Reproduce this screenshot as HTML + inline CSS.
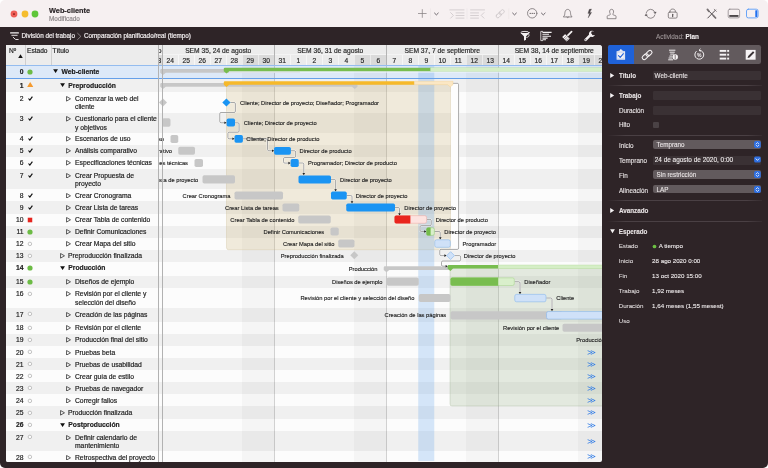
<!DOCTYPE html><html lang="es"><head><meta charset="utf-8"><title>Web-cliente</title><style>
html,body{margin:0;padding:0;background:#fff}
body{width:768px;height:468px;overflow:hidden;position:relative;font-family:"Liberation Sans",sans-serif;color:#1c1c1c;-webkit-font-smoothing:antialiased}
div,span,svg{position:absolute;box-sizing:border-box}
.win{will-change:transform;left:0;top:0;width:768px;height:468px;background:linear-gradient(#f6f0f1 0,#f6f0f1 27.4px,#2e2427 27.4px);border-radius:5px;overflow:hidden}
.tb{left:0;top:0;width:768px;height:27px;background:transparent}
.t{white-space:nowrap;line-height:8px;font-size:6.75px;-webkit-text-stroke:0.18px currentColor}
.b{font-weight:bold}
.row{left:6px;width:596px}
.gl{font-size:5.75px;line-height:8px;white-space:nowrap;color:#222}
.rp{font-size:6.3px;line-height:8px;white-space:nowrap;color:#e9e4e5;-webkit-text-stroke:0.1px currentColor}
text.l{fill:#222;stroke:#222;stroke-width:0.13px}
</style></head><body>
<div class="win">
<div class="tb"></div>
<svg style="left:9.90px;top:9.8px" width="8" height="8" viewBox="0 0 8 8"><circle cx="4" cy="4" r="3.4" fill="#ee5f57"/><circle cx="4" cy="4" r="0.85" fill="#6e0a08"/></svg>
<svg style="left:20.60px;top:9.8px" width="8" height="8" viewBox="0 0 8 8"><circle cx="4" cy="4" r="3.4" fill="#f5bd2f"/></svg>
<svg style="left:31.30px;top:9.8px" width="8" height="8" viewBox="0 0 8 8"><circle cx="4" cy="4" r="3.4" fill="#5fc63a"/></svg>
<div class="t b" style="left:49px;top:7.1px;font-size:7.35px;color:#2b2628">Web-cliente</div>
<div class="t" style="left:49px;top:15px;font-size:6.4px;color:#8d8789">Modificado</div>
<svg style="left:400px;top:0" width="368" height="27" viewBox="400 0 368 27" fill="none" stroke-linecap="round" stroke-linejoin="round">
<path d="M418.4 13.5 H426.2 M422.3 9.6 V17.4" stroke="#878183" stroke-width="0.75"/>
<path d="M430.50 8.8 V18.7" stroke="#ebe4e6" stroke-width="0.6"/>
<path d="M467.00 8.8 V18.7" stroke="#ebe4e6" stroke-width="0.6"/>
<path d="M508.75 8.8 V18.7" stroke="#ebe4e6" stroke-width="0.6"/>
<path d="M434.55 13.1 L436.40 14.9 L438.25 13.1" stroke="#59545a" stroke-width="0.9"/>
<path d="M512.65 13.1 L514.50 14.9 L516.35 13.1" stroke="#59545a" stroke-width="0.9"/>
<path d="M541.45 13.1 L543.30 14.9 L545.15 13.1" stroke="#59545a" stroke-width="0.9"/>
<path d="M449.8 9.9 H464 M456 12.9 H464 M456 15.5 H464 M456 18.1 H464 M450.6 12.6 L453.4 15.4 L450.6 18.2" stroke="#cdc7c9" stroke-width="0.8"/>
<path d="M470.6 9.9 H484.5 M470.6 12.9 H478.5 M470.6 15.5 H478.5 M470.6 18.1 H478.5 M484 12.6 L481.2 15.4 L484 18.2" stroke="#cdc7c9" stroke-width="0.8"/>
<g transform="translate(500.2 13.8) rotate(-45)" stroke="#cdc7c9" stroke-width="0.85"><rect x="-5" y="-1.7" width="5.8" height="3.4" rx="1.7"/><rect x="-0.8" y="-1.7" width="5.8" height="3.4" rx="1.7"/></g>
<circle cx="532.2" cy="13.3" r="4.7" stroke="#777173" stroke-width="0.8"/>
<circle cx="530.20" cy="13.3" r="0.65" fill="#4d484a"/>
<circle cx="532.20" cy="13.3" r="0.65" fill="#4d484a"/>
<circle cx="534.20" cy="13.3" r="0.65" fill="#4d484a"/>
<path d="M563.6 16.7 C564.9 15.6 564.7 14.2 564.9 12.6 C565.2 10.4 566.3 9.4 567.7 9.4 C569.1 9.4 570.2 10.4 570.5 12.6 C570.7 14.2 570.5 15.6 571.8 16.7 Z M566.8 17 C566.9 18 568.5 18 568.6 17" stroke="#777173" stroke-width="0.8"/>
<path d="M591.4 9.1 L589.3 9.3 L587.9 13.4 L589.5 13.3 L588.2 17.9 L591.6 12.4 L589.9 12.5 Z" fill="#4d484a" stroke="#4d484a" stroke-width="0.3"/>
<path d="M607.2 18.3 V16.4 C607.2 15.6 607.9 15.4 609.3 15.2 C610.4 15 610.5 14.2 610 13.3 C609.3 12.2 609.3 9.3 611.6 9.3 C613.9 9.3 613.9 12.2 613.2 13.3 C612.7 14.2 612.8 15 613.9 15.2 C615.3 15.4 616 15.6 616 16.4 V18.3 Z" stroke="#777173" stroke-width="0.8"/>
<path d="M646.25 12.64 A4.5 4.5 0 0 1 654.77 12.11 M654.95 14.96 A4.5 4.5 0 0 1 646.43 15.49" stroke="#777173" stroke-width="0.8"/>
<path d="M655.16 13.77 l1.1 -1.8 l-2.1 0.2 Z M646.04 13.83 l-1.1 1.8 l2.1 -0.2 Z" fill="#4d484a" stroke="#4d484a" stroke-width="0.3"/>
<rect x="668.3" y="12.1" width="8.8" height="6" rx="1.2" stroke="#777173" stroke-width="0.85"/>
<path d="M670.1 12 V11 C670.1 8.4 675.3 8.4 675.3 11 V12" stroke="#777173" stroke-width="0.85"/>
<path d="M672.7 14.2 V16.6" stroke="#4d484a" stroke-width="1.1"/>
<path d="M707.6 9.6 L715.2 17.6 M715.6 10 L707.8 18" stroke="#4d484a" stroke-width="0.95"/>
<path d="M713.2 15.4 L715.6 18 M707.4 9.4 L709 11.4" stroke="#777173" stroke-width="1.7"/>
<path d="M714.2 9.2 L716.4 11.4" stroke="#777173" stroke-width="0.8"/>
<rect x="728.2" y="9.2" width="11.4" height="8.7" rx="1.6" stroke="#8e888a" stroke-width="0.8"/>
<rect x="729.3" y="15" width="9.2" height="1.9" fill="#4d484a"/>
<rect x="746.5" y="9.2" width="11.6" height="8.7" rx="1.8" stroke="#6aa5f8" stroke-width="1"/>
<rect x="755.3" y="10.2" width="2" height="6.7" rx="0.5" fill="#1f6ff0"/>
</svg>
<div class="t" style="left:21.5px;top:32.2px;font-size:6.33px;color:#f3eff0">División del trabajo</div>
<div class="t" style="left:84px;top:32.2px;font-size:6.33px;color:#f3eff0">Comparación planificado/real (tiempo)</div>
<svg style="left:6px;top:27px" width="596" height="18" viewBox="6 27 596 18" fill="none" stroke-linecap="round" stroke-linejoin="round">
<path d="M10.6 32.9 H18.4" stroke="#f4f1f2" stroke-width="1.2"/>
<path d="M11.8 35.3 H17.2 M13.2 37.3 L15.6 39.5 H18.2" stroke="#f4f1f2" stroke-width="0.9"/>
<path d="M77.6 33.3 L80.9 36.4 L77.6 39.5" stroke="#aaa3a5" stroke-width="0.7"/>
<ellipse cx="525" cy="32.7" rx="4.2" ry="1.3" stroke="#f4f1f2" stroke-width="0.9"/>
<path d="M520.8 33 L524 36.6 V40.8 L526 39.8 V36.6 L529.2 33 Z" fill="#f4f1f2"/>
<path d="M526.6 37.4 C529.4 37.4 529.6 34.6 528.6 34" stroke="#f4f1f2" stroke-width="0.8"/>
<path d="M542.6 31.4 H540.8 V40.6 H542.6" stroke="#f4f1f2" stroke-width="0.8"/>
<path d="M542.4 32.4 H551.6 M542.4 34.3 H549 M542.4 36.2 H551 M542.4 38.1 H547.6 M542.4 39.8 H546" stroke="#f4f1f2" stroke-width="1.1" stroke-linecap="butt"/>
<path d="M571.6 31.6 L567.6 35.6" stroke="#f4f1f2" stroke-width="1.7"/>
<path d="M565.2 34 L569.8 38.4 L566.6 41.4 L562.2 37 Z" fill="#f4f1f2"/>
<path d="M563.6 38.4 L565.6 36.4 M564.8 39.6 L566.8 37.6 M566 40.8 L568 38.8" stroke="#2e2427" stroke-width="0.45"/>
<path d="M565.6 34.4 L569.4 38" stroke="#2e2427" stroke-width="0.5"/>
<path d="M585.6 39.9 L590.8 34.7" stroke="#f4f1f2" stroke-width="2.6"/>
<path d="M594.2 31.6 A3.1 3.1 0 1 0 594.9 34.9 L592.6 35.3 L590.9 33.6 L591.8 31.3 Z" fill="#f4f1f2"/>
<circle cx="585.7" cy="39.8" r="0.55" fill="#2e2427"/>
</svg>
<div style="left:6px;top:45px;width:596px;height:416.70px;background:#fcfcfc;overflow:hidden;border-radius:0 3px 2px 2px">
<div style="left:0;top:20.00px;width:596px;height:13.75px;background:#dde9f8"></div>
<div style="left:0;top:33.75px;width:596px;height:13.15px;background:#f0f0f0"></div>
<div style="left:0;top:67.50px;width:596px;height:20.25px;background:#f0f0f0"></div>
<div style="left:0;top:99.75px;width:596px;height:11.75px;background:#f0f0f0"></div>
<div style="left:0;top:123.75px;width:596px;height:20.25px;background:#f0f0f0"></div>
<div style="left:0;top:156.25px;width:596px;height:12.25px;background:#f0f0f0"></div>
<div style="left:0;top:180.60px;width:596px;height:12.15px;background:#f0f0f0"></div>
<div style="left:0;top:205.00px;width:596px;height:12.25px;background:#f0f0f0"></div>
<div style="left:0;top:230.60px;width:596px;height:12.15px;background:#f0f0f0"></div>
<div style="left:0;top:262.90px;width:596px;height:14.00px;background:#f0f0f0"></div>
<div style="left:0;top:288.75px;width:596px;height:11.85px;background:#f0f0f0"></div>
<div style="left:0;top:312.75px;width:596px;height:12.00px;background:#f0f0f0"></div>
<div style="left:0;top:336.90px;width:596px;height:12.10px;background:#f0f0f0"></div>
<div style="left:0;top:361.40px;width:596px;height:12.20px;background:#f0f0f0"></div>
<div style="left:0;top:385.90px;width:596px;height:20.00px;background:#f0f0f0"></div>
<div style="left:236.25px;top:20px;width:32px;height:500px;background:rgba(0,0,0,0.028)"></div>
<div style="left:348.25px;top:20px;width:32px;height:500px;background:rgba(0,0,0,0.028)"></div>
<div style="left:460.25px;top:20px;width:32px;height:500px;background:rgba(0,0,0,0.028)"></div>
<div style="left:572.25px;top:20px;width:32px;height:500px;background:rgba(0,0,0,0.028)"></div>
<div style="left:268.00px;top:20px;width:1px;height:500px;background:rgba(0,0,0,0.17)"></div>
<div style="left:380.00px;top:20px;width:1px;height:500px;background:rgba(0,0,0,0.17)"></div>
<div style="left:492.00px;top:20px;width:1px;height:500px;background:rgba(0,0,0,0.17)"></div>
<svg style="left:0;top:0" width="596" height="416.25" viewBox="6 45 596 416.25" font-family="Liberation Sans, sans-serif" font-size="5.75">
<path d="M226.5 84.5 H450.6 V247.7 Q450.6 249.7 448.6 249.7 H228.5 Q226.5 249.7 226.5 247.7 Z" fill="rgba(204,180,120,0.25)" stroke="rgba(190,165,110,0.45)" stroke-width="0.5"/>
<path d="M450 268.5 H610 V406 H452 Q450 406 450 404 Z" fill="rgba(159,181,144,0.27)" stroke="rgba(140,165,120,0.5)" stroke-width="0.5"/>
<rect x="418.25" y="65" width="16" height="400" fill="rgba(92,160,236,0.25)"/>
<path d="M160.25 70.20 Q160.25 69.00 161.45 69.00 H300.00 V72.75 H165.75 L163.00 75.05 L160.25 72.75 Z" fill="#c7c7c7" />
<rect x="229" y="71.25" width="380" height="1.3" fill="#eef4fc"/>
<path d="M160.25 84.20 Q160.25 83.00 161.45 83.00 H357.50 V86.75 L354.75 89.05 L352.00 86.75 H165.75 L163.00 89.05 L160.25 86.75 Z" fill="#c7c7c7" />
<path d="M383.75 267.45 Q383.75 266.25 384.95 266.25 H449.50 V270.00 H389.25 L386.50 272.30 L383.75 270.00 Z" fill="#c7c7c7" />
<rect x="162.00" y="118.25" width="8.50" height="8.50" rx="1.8" fill="#c7c7c7"/>
<rect x="170.50" y="135.00" width="7.75" height="8.00" rx="1.8" fill="#c7c7c7"/>
<rect x="178.25" y="146.75" width="16.75" height="8.00" rx="1.8" fill="#c7c7c7"/>
<rect x="194.50" y="159.00" width="8.50" height="8.00" rx="1.8" fill="#c7c7c7"/>
<rect x="202.50" y="175.25" width="32.50" height="8.25" rx="1.8" fill="#c7c7c7"/>
<rect x="234.50" y="191.50" width="48.50" height="8.00" rx="1.8" fill="#c7c7c7"/>
<rect x="282.50" y="203.50" width="16.75" height="8.00" rx="1.8" fill="#c7c7c7"/>
<rect x="298.25" y="215.50" width="32.50" height="8.00" rx="1.8" fill="#c7c7c7"/>
<rect x="330.50" y="227.50" width="8.25" height="8.10" rx="1.8" fill="#c7c7c7"/>
<rect x="338.25" y="239.50" width="16.25" height="8.10" rx="1.8" fill="#c7c7c7"/>
<rect x="386.75" y="277.60" width="32.00" height="8.15" rx="1.8" fill="#c7c7c7"/>
<rect x="418.75" y="294.10" width="31.75" height="8.00" rx="1.8" fill="#c7c7c7"/>
<rect x="450.50" y="311.25" width="112.00" height="8.15" rx="1.8" fill="#c7c7c7"/>
<rect x="562.50" y="323.75" width="49.50" height="8.00" rx="1.8" fill="#c7c7c7"/>
<path d="M159.00 102.50 L163.00 98.50 L167.00 102.50 L163.00 106.50 Z" fill="#c7c7c7"/>
<path d="M350.25 255.30 L354.25 251.30 L358.25 255.30 L354.25 259.30 Z" fill="#c7c7c7"/>
<text x="164.00" y="141.10" text-anchor="end" class="l">Escenarios de uso</text>
<text x="172.00" y="152.85" text-anchor="end" class="l">Análisis comparativo</text>
<text x="188.00" y="165.10" text-anchor="end" class="l">Especificaciones técnicas</text>
<text x="198.25" y="181.50" text-anchor="end" class="l">Crear Propuesta de proyecto</text>
<text x="230.50" y="197.60" text-anchor="end" class="l">Crear Cronograma</text>
<text x="278.75" y="209.60" text-anchor="end" class="l">Crear Lista de tareas</text>
<text x="294.50" y="221.60" text-anchor="end" class="l">Crear Tabla de contenido</text>
<text x="324.25" y="233.60" text-anchor="end" class="l">Definir Comunicaciones</text>
<text x="334.50" y="245.60" text-anchor="end" class="l">Crear Mapa del sitio</text>
<text x="343.75" y="257.60" text-anchor="end" class="l">Preproducción finalizada</text>
<text x="377.50" y="271.40" text-anchor="end" class="l">Producción</text>
<text x="382.50" y="283.80" text-anchor="end" class="l">Diseños de ejemplo</text>
<text x="414.50" y="300.10" text-anchor="end" class="l">Revisión por el cliente y selección del diseño</text>
<text x="446.25" y="317.40" text-anchor="end" class="l">Creación de las páginas</text>
<text x="503" y="329.9" class="l">Revisión por el cliente</text>
<text x="576.25" y="341.9" class="l">Producción final del sitio</text>
<rect x="451" y="83.3" width="7.6" height="166" fill="#fdfdfd"/>
<path d="M230.50 102.50 L234.10 102.50 Q235.40 102.50 235.40 103.80 L235.40 111.20 Q235.40 112.50 234.10 112.50 L221.05 112.50 Q219.75 112.50 219.75 113.80 L219.75 121.45 Q219.75 122.75 221.05 122.75 L225.60 122.75" fill="none" stroke="rgba(255,255,255,0.85)" stroke-width="1.7" stroke-linejoin="round"/>
<path d="M235.00 122.75 L237.80 122.75 Q239.10 122.75 239.10 124.05 L239.10 130.95 Q239.10 132.25 237.80 132.25 L229.20 132.25 Q227.90 132.25 227.90 133.55 L227.90 137.45 Q227.90 138.75 229.20 138.75 L233.60 138.75" fill="none" stroke="rgba(255,255,255,0.85)" stroke-width="1.7" stroke-linejoin="round"/>
<path d="M243.00 138.75 L266.20 138.75 Q267.50 138.75 267.50 140.05 L267.50 149.40 Q267.50 150.70 268.80 150.70 L273.20 150.70" fill="none" stroke="rgba(255,255,255,0.85)" stroke-width="1.7" stroke-linejoin="round"/>
<path d="M290.90 150.70 L294.30 150.70 Q295.60 150.70 295.60 152.00 L295.60 156.20 Q295.60 157.50 294.30 157.50 L284.80 157.50 Q283.50 157.50 283.50 158.80 L283.50 161.80 Q283.50 163.10 284.80 163.10 L289.60 163.10" fill="none" stroke="rgba(255,255,255,0.85)" stroke-width="1.7" stroke-linejoin="round"/>
<path d="M298.75 163.00 L302.45 163.00 Q303.75 163.00 303.75 164.30 L303.75 174.00" fill="none" stroke="rgba(255,255,255,0.85)" stroke-width="1.7" stroke-linejoin="round"/>
<path d="M331.00 179.40 L334.30 179.40 Q335.60 179.40 335.60 180.70 L335.60 190.20" fill="none" stroke="rgba(255,255,255,0.85)" stroke-width="1.7" stroke-linejoin="round"/>
<path d="M346.75 195.50 L350.70 195.50 Q352.00 195.50 352.00 196.80 L352.00 202.20" fill="none" stroke="rgba(255,255,255,0.85)" stroke-width="1.7" stroke-linejoin="round"/>
<path d="M395.00 207.50 L398.20 207.50 Q399.50 207.50 399.50 208.80 L399.50 214.20" fill="none" stroke="rgba(255,255,255,0.85)" stroke-width="1.7" stroke-linejoin="round"/>
<path d="M427.00 219.40 L429.95 219.40 Q431.25 219.40 431.25 220.70 L431.25 224.30 Q431.25 225.60 429.95 225.60 L421.30 225.60 Q420.00 225.60 420.00 226.90 L420.00 230.20 Q420.00 231.50 421.30 231.50 L425.40 231.50" fill="none" stroke="rgba(255,255,255,0.85)" stroke-width="1.7" stroke-linejoin="round"/>
<path d="M434.40 231.50 L438.95 231.50 Q440.25 231.50 440.25 232.80 L440.25 238.20" fill="none" stroke="rgba(255,255,255,0.85)" stroke-width="1.7" stroke-linejoin="round"/>
<path d="M452.00 83.30 L457.30 83.30 Q458.60 83.30 458.60 84.60 L458.60 248.10 Q458.60 249.40 457.30 249.40 L441.05 249.40 Q439.75 249.40 439.75 250.70 L439.75 254.30 Q439.75 255.60 441.05 255.60 L445.40 255.60" fill="none" stroke="rgba(255,255,255,0.85)" stroke-width="1.7" stroke-linejoin="round"/>
<path d="M454.75 255.60 L459.30 255.60 Q460.60 255.60 460.60 256.90 L460.60 259.70 Q460.60 261.00 459.30 261.00 L442.80 261.00 Q441.50 261.00 441.50 262.30 L441.50 264.90 Q441.50 266.20 442.80 266.20 L446.60 266.20" fill="none" stroke="rgba(255,255,255,0.85)" stroke-width="1.7" stroke-linejoin="round"/>
<path d="M514.50 281.70 L518.70 281.70 Q520.00 281.70 520.00 283.00 L520.00 293.00" fill="none" stroke="rgba(255,255,255,0.85)" stroke-width="1.7" stroke-linejoin="round"/>
<path d="M546.25 298.00 L550.70 298.00 Q552.00 298.00 552.00 299.30 L552.00 310.00" fill="none" stroke="rgba(255,255,255,0.85)" stroke-width="1.7" stroke-linejoin="round"/>
<path d="M230.50 102.50 L234.10 102.50 Q235.40 102.50 235.40 103.80 L235.40 111.20 Q235.40 112.50 234.10 112.50 L221.05 112.50 Q219.75 112.50 219.75 113.80 L219.75 121.45 Q219.75 122.75 221.05 122.75 L225.60 122.75" fill="none" stroke="#606060" stroke-width="0.55" stroke-linejoin="round"/>
<path d="M226.60 122.75 l-2.2 -1.3 v2.6 Z" fill="#222"/>
<path d="M235.00 122.75 L237.80 122.75 Q239.10 122.75 239.10 124.05 L239.10 130.95 Q239.10 132.25 237.80 132.25 L229.20 132.25 Q227.90 132.25 227.90 133.55 L227.90 137.45 Q227.90 138.75 229.20 138.75 L233.60 138.75" fill="none" stroke="#606060" stroke-width="0.55" stroke-linejoin="round"/>
<path d="M234.60 138.75 l-2.2 -1.3 v2.6 Z" fill="#222"/>
<path d="M243.00 138.75 L266.20 138.75 Q267.50 138.75 267.50 140.05 L267.50 149.40 Q267.50 150.70 268.80 150.70 L273.20 150.70" fill="none" stroke="#606060" stroke-width="0.55" stroke-linejoin="round"/>
<path d="M274.20 150.70 l-2.2 -1.3 v2.6 Z" fill="#222"/>
<path d="M290.90 150.70 L294.30 150.70 Q295.60 150.70 295.60 152.00 L295.60 156.20 Q295.60 157.50 294.30 157.50 L284.80 157.50 Q283.50 157.50 283.50 158.80 L283.50 161.80 Q283.50 163.10 284.80 163.10 L289.60 163.10" fill="none" stroke="#606060" stroke-width="0.55" stroke-linejoin="round"/>
<path d="M290.60 163.10 l-2.2 -1.3 v2.6 Z" fill="#222"/>
<path d="M298.75 163.00 L302.45 163.00 Q303.75 163.00 303.75 164.30 L303.75 174.00" fill="none" stroke="#606060" stroke-width="0.55" stroke-linejoin="round"/>
<path d="M303.75 175.20 l-1.3 -2.2 h2.6 Z" fill="#222"/>
<path d="M331.00 179.40 L334.30 179.40 Q335.60 179.40 335.60 180.70 L335.60 190.20" fill="none" stroke="#606060" stroke-width="0.55" stroke-linejoin="round"/>
<path d="M335.60 191.40 l-1.3 -2.2 h2.6 Z" fill="#222"/>
<path d="M346.75 195.50 L350.70 195.50 Q352.00 195.50 352.00 196.80 L352.00 202.20" fill="none" stroke="#606060" stroke-width="0.55" stroke-linejoin="round"/>
<path d="M352.00 203.40 l-1.3 -2.2 h2.6 Z" fill="#222"/>
<path d="M395.00 207.50 L398.20 207.50 Q399.50 207.50 399.50 208.80 L399.50 214.20" fill="none" stroke="#606060" stroke-width="0.55" stroke-linejoin="round"/>
<path d="M399.50 215.40 l-1.3 -2.2 h2.6 Z" fill="#222"/>
<path d="M427.00 219.40 L429.95 219.40 Q431.25 219.40 431.25 220.70 L431.25 224.30 Q431.25 225.60 429.95 225.60 L421.30 225.60 Q420.00 225.60 420.00 226.90 L420.00 230.20 Q420.00 231.50 421.30 231.50 L425.40 231.50" fill="none" stroke="#606060" stroke-width="0.55" stroke-linejoin="round"/>
<path d="M426.40 231.50 l-2.2 -1.3 v2.6 Z" fill="#222"/>
<path d="M434.40 231.50 L438.95 231.50 Q440.25 231.50 440.25 232.80 L440.25 238.20" fill="none" stroke="#606060" stroke-width="0.55" stroke-linejoin="round"/>
<path d="M440.25 239.40 l-1.3 -2.2 h2.6 Z" fill="#222"/>
<path d="M452.00 83.30 L457.30 83.30 Q458.60 83.30 458.60 84.60 L458.60 248.10 Q458.60 249.40 457.30 249.40 L441.05 249.40 Q439.75 249.40 439.75 250.70 L439.75 254.30 Q439.75 255.60 441.05 255.60 L445.40 255.60" fill="none" stroke="#606060" stroke-width="0.55" stroke-linejoin="round"/>
<path d="M446.60 255.60 l-2.2 -1.3 v2.6 Z" fill="#222"/>
<path d="M454.75 255.60 L459.30 255.60 Q460.60 255.60 460.60 256.90 L460.60 259.70 Q460.60 261.00 459.30 261.00 L442.80 261.00 Q441.50 261.00 441.50 262.30 L441.50 264.90 Q441.50 266.20 442.80 266.20 L446.60 266.20" fill="none" stroke="#606060" stroke-width="0.55" stroke-linejoin="round"/>
<path d="M447.80 266.20 l-2.2 -1.3 v2.6 Z" fill="#222"/>
<path d="M514.50 281.70 L518.70 281.70 Q520.00 281.70 520.00 283.00 L520.00 293.00" fill="none" stroke="#606060" stroke-width="0.55" stroke-linejoin="round"/>
<path d="M520.00 294.20 l-1.3 -2.2 h2.6 Z" fill="#222"/>
<path d="M546.25 298.00 L550.70 298.00 Q552.00 298.00 552.00 299.30 L552.00 310.00" fill="none" stroke="#606060" stroke-width="0.55" stroke-linejoin="round"/>
<path d="M552.00 311.20 l-1.3 -2.2 h2.6 Z" fill="#222"/>
<path d="M223.75 68.95 Q223.75 67.75 224.95 67.75 H430.60 V71.25 H229.25 L226.50 73.55 L223.75 71.25 Z" fill="#78bd4f" />
<rect x="430.6" y="67.75" width="180" height="3.5" fill="#d5eec6" stroke="#b4dc9c" stroke-width="0.4"/>
<path d="M223.75 82.45 Q223.75 81.25 224.95 81.25 H414.40 V84.65 H229.25 L226.50 86.95 L223.75 84.65 Z" fill="#f6b92a" />
<path d="M414.40 82.45 Q414.40 81.25 415.60 81.25 H453.00 V84.65 L450.25 86.95 L447.50 84.65 H414.40 Z" fill="#fbe7c4" stroke="#f2cf8e" stroke-width="0.4"/>
<path d="M447.60 266.20 Q447.60 265.00 448.80 265.00 H498.25 V268.60 H453.10 L450.35 270.90 L447.60 268.60 Z" fill="#78bd4f" />
<rect x="498.25" y="265" width="120" height="3.6" fill="#d5eec6" stroke="#b4dc9c" stroke-width="0.4"/>
<rect x="226.60" y="118.50" width="8.40" height="8.00" rx="1.7" fill="#1a94f3"/>
<rect x="234.50" y="135.00" width="8.40" height="7.75" rx="1.7" fill="#1a94f3"/>
<rect x="274.10" y="146.90" width="16.80" height="7.85" rx="1.7" fill="#1a94f3"/>
<rect x="290.60" y="159.00" width="8.15" height="7.90" rx="1.7" fill="#1a94f3"/>
<rect x="298.50" y="175.40" width="32.50" height="8.00" rx="1.7" fill="#1a94f3"/>
<rect x="331.00" y="191.50" width="15.75" height="8.00" rx="1.7" fill="#1a94f3"/>
<rect x="346.25" y="203.50" width="48.75" height="8.00" rx="1.7" fill="#1a94f3"/>
<path d="M222.30 102.50 L226.40 98.40 L230.50 102.50 L226.40 106.60 Z" fill="#1a94f3"/>
<rect x="394.75" y="215.65" width="31.80" height="7.60" rx="1.7" fill="#fde3e0" stroke="#f0a6a0" stroke-width="0.5"/>
<path d="M394.50 217.10 Q394.50 215.40 396.20 215.40 H410.40 V223.50 H396.20 Q394.50 223.50 394.50 221.80 Z" fill="#e9251d"/>
<rect x="426.65" y="227.75" width="7.70" height="7.60" rx="1.7" fill="#d9efcb" stroke="#8cc868" stroke-width="0.5"/>
<path d="M426.40 229.20 Q426.40 227.50 428.10 227.50 H430.60 V235.60 H428.10 Q426.40 235.60 426.40 233.90 Z" fill="#74bb4c"/>
<rect x="450.75" y="277.85" width="63.50" height="7.65" rx="1.7" fill="#d9efcb" stroke="#a5d488" stroke-width="0.5"/>
<path d="M450.50 279.30 Q450.50 277.60 452.20 277.60 H498.25 V285.75 H452.20 Q450.50 285.75 450.50 284.05 Z" fill="#78bd4f"/>
<rect x="434.77" y="239.77" width="15.55" height="7.55" rx="1.8" fill="#cfe1f8" stroke="#82b3ec" stroke-width="0.55"/>
<rect x="514.77" y="294.37" width="31.20" height="7.45" rx="1.8" fill="#cfe1f8" stroke="#82b3ec" stroke-width="0.55"/>
<rect x="546.52" y="311.52" width="65.20" height="7.60" rx="1.8" fill="#cfe1f8" stroke="#82b3ec" stroke-width="0.55"/>
<path d="M446.70 255.60 L450.60 251.70 L454.50 255.60 L450.60 259.50 Z" fill="#cfe1f8" stroke="#82b3ec" stroke-width="0.6"/>
<text x="240.00" y="104.60" class="l">Cliente; Director de proyecto; Diseñador; Programador</text>
<text x="243.75" y="124.70" class="l">Cliente; Director de proyecto</text>
<text x="246.25" y="141.00" class="l">Cliente; Director de producto</text>
<text x="299.50" y="152.90" class="l">Director de producto</text>
<text x="308.00" y="165.10" class="l">Programador; Director de producto</text>
<text x="340.00" y="181.50" class="l">Director de proyecto</text>
<text x="355.75" y="197.60" class="l">Director de proyecto</text>
<text x="404.25" y="209.60" class="l">Director de proyecto</text>
<text x="435.75" y="221.60" class="l">Director de producto</text>
<text x="444.25" y="233.70" class="l">Director de proyecto</text>
<text x="462.50" y="245.70" class="l">Programador</text>
<text x="463.75" y="257.80" class="l">Director de proyecto</text>
<text x="524.25" y="283.80" class="l">Diseñador</text>
<text x="556.25" y="300.10" class="l">Cliente</text>
<text x="586.5" y="354.90" fill="#2f7be6" stroke="none" font-size="7.5" textLength="8.6" lengthAdjust="spacingAndGlyphs">≫</text>
<text x="586.5" y="367.10" fill="#2f7be6" stroke="none" font-size="7.5" textLength="8.6" lengthAdjust="spacingAndGlyphs">≫</text>
<text x="586.5" y="379.40" fill="#2f7be6" stroke="none" font-size="7.5" textLength="8.6" lengthAdjust="spacingAndGlyphs">≫</text>
<text x="586.5" y="391.40" fill="#2f7be6" stroke="none" font-size="7.5" textLength="8.6" lengthAdjust="spacingAndGlyphs">≫</text>
<text x="586.5" y="403.40" fill="#2f7be6" stroke="none" font-size="7.5" textLength="8.6" lengthAdjust="spacingAndGlyphs">≫</text>
<text x="586.5" y="415.40" fill="#2f7be6" stroke="none" font-size="7.5" textLength="8.6" lengthAdjust="spacingAndGlyphs">≫</text>
<text x="586.5" y="427.70" fill="#2f7be6" stroke="none" font-size="7.5" textLength="8.6" lengthAdjust="spacingAndGlyphs">≫</text>
<text x="586.5" y="443.90" fill="#2f7be6" stroke="none" font-size="7.5" textLength="8.6" lengthAdjust="spacingAndGlyphs">≫</text>
<text x="586.5" y="459.40" fill="#2f7be6" stroke="none" font-size="7.5" textLength="8.6" lengthAdjust="spacingAndGlyphs">≫</text>
</svg>
<div style="left:152.00px;top:0;width:444.00px;height:20px;background:#ececec"></div>
<div style="left:152.00px;top:9px;width:444.00px;height:1px;background:#f4f4f4"></div>
<div style="left:140px;top:10px;width:16px;height:10px;background:#dadada;border-left:1px solid #ebebeb"></div>
<div class="t" style="left:139.30px;top:11.5px;width:16px;text-align:right;font-size:6.7px;color:#2a2a2a">23</div>
<div style="left:156px;top:10px;width:16px;height:10px;background:#ebebeb;border-left:1px solid #f6f6f6"></div>
<div class="t" style="left:156.25px;top:11.5px;width:16px;text-align:center;font-size:6.7px;color:#2a2a2a">24</div>
<div style="left:172px;top:10px;width:16px;height:10px;background:#ebebeb;border-left:1px solid #f6f6f6"></div>
<div class="t" style="left:172.25px;top:11.5px;width:16px;text-align:center;font-size:6.7px;color:#2a2a2a">25</div>
<div style="left:188px;top:10px;width:16px;height:10px;background:#ebebeb;border-left:1px solid #f6f6f6"></div>
<div class="t" style="left:188.25px;top:11.5px;width:16px;text-align:center;font-size:6.7px;color:#2a2a2a">26</div>
<div style="left:204px;top:10px;width:16px;height:10px;background:#ebebeb;border-left:1px solid #f6f6f6"></div>
<div class="t" style="left:204.25px;top:11.5px;width:16px;text-align:center;font-size:6.7px;color:#2a2a2a">27</div>
<div style="left:220px;top:10px;width:16px;height:10px;background:#ebebeb;border-left:1px solid #f6f6f6"></div>
<div class="t" style="left:220.25px;top:11.5px;width:16px;text-align:center;font-size:6.7px;color:#2a2a2a">28</div>
<div style="left:236px;top:10px;width:16px;height:10px;background:#dadada;border-left:1px solid #ebebeb"></div>
<div class="t" style="left:236.25px;top:11.5px;width:16px;text-align:center;font-size:6.7px;color:#2a2a2a">29</div>
<div style="left:252px;top:10px;width:16px;height:10px;background:#dadada;border-left:1px solid #ebebeb"></div>
<div class="t" style="left:252.25px;top:11.5px;width:16px;text-align:center;font-size:6.7px;color:#2a2a2a">30</div>
<div style="left:268px;top:10px;width:16px;height:10px;background:#ebebeb;border-left:1px solid #f6f6f6"></div>
<div class="t" style="left:268.25px;top:11.5px;width:16px;text-align:center;font-size:6.7px;color:#2a2a2a">31</div>
<div style="left:284px;top:10px;width:16px;height:10px;background:#ebebeb;border-left:1px solid #f6f6f6"></div>
<div class="t" style="left:284.25px;top:11.5px;width:16px;text-align:center;font-size:6.7px;color:#2a2a2a">1</div>
<div style="left:300px;top:10px;width:16px;height:10px;background:#ebebeb;border-left:1px solid #f6f6f6"></div>
<div class="t" style="left:300.25px;top:11.5px;width:16px;text-align:center;font-size:6.7px;color:#2a2a2a">2</div>
<div style="left:316px;top:10px;width:16px;height:10px;background:#ebebeb;border-left:1px solid #f6f6f6"></div>
<div class="t" style="left:316.25px;top:11.5px;width:16px;text-align:center;font-size:6.7px;color:#2a2a2a">3</div>
<div style="left:332px;top:10px;width:16px;height:10px;background:#ebebeb;border-left:1px solid #f6f6f6"></div>
<div class="t" style="left:332.25px;top:11.5px;width:16px;text-align:center;font-size:6.7px;color:#2a2a2a">4</div>
<div style="left:348px;top:10px;width:16px;height:10px;background:#dadada;border-left:1px solid #ebebeb"></div>
<div class="t" style="left:348.25px;top:11.5px;width:16px;text-align:center;font-size:6.7px;color:#2a2a2a">5</div>
<div style="left:364px;top:10px;width:16px;height:10px;background:#dadada;border-left:1px solid #ebebeb"></div>
<div class="t" style="left:364.25px;top:11.5px;width:16px;text-align:center;font-size:6.7px;color:#2a2a2a">6</div>
<div style="left:380px;top:10px;width:16px;height:10px;background:#ebebeb;border-left:1px solid #f6f6f6"></div>
<div class="t" style="left:380.25px;top:11.5px;width:16px;text-align:center;font-size:6.7px;color:#2a2a2a">7</div>
<div style="left:396px;top:10px;width:16px;height:10px;background:#ebebeb;border-left:1px solid #f6f6f6"></div>
<div class="t" style="left:396.25px;top:11.5px;width:16px;text-align:center;font-size:6.7px;color:#2a2a2a">8</div>
<div style="left:412px;top:10px;width:16px;height:10px;background:#ebebeb;border-left:1px solid #f6f6f6"></div>
<div class="t" style="left:412.25px;top:11.5px;width:16px;text-align:center;font-size:6.7px;color:#2a2a2a">9</div>
<div style="left:428px;top:10px;width:16px;height:10px;background:#ebebeb;border-left:1px solid #f6f6f6"></div>
<div class="t" style="left:428.25px;top:11.5px;width:16px;text-align:center;font-size:6.7px;color:#2a2a2a">10</div>
<div style="left:444px;top:10px;width:16px;height:10px;background:#ebebeb;border-left:1px solid #f6f6f6"></div>
<div class="t" style="left:444.25px;top:11.5px;width:16px;text-align:center;font-size:6.7px;color:#2a2a2a">11</div>
<div style="left:460px;top:10px;width:16px;height:10px;background:#dadada;border-left:1px solid #ebebeb"></div>
<div class="t" style="left:460.25px;top:11.5px;width:16px;text-align:center;font-size:6.7px;color:#2a2a2a">12</div>
<div style="left:476px;top:10px;width:16px;height:10px;background:#dadada;border-left:1px solid #ebebeb"></div>
<div class="t" style="left:476.25px;top:11.5px;width:16px;text-align:center;font-size:6.7px;color:#2a2a2a">13</div>
<div style="left:492px;top:10px;width:16px;height:10px;background:#ebebeb;border-left:1px solid #f6f6f6"></div>
<div class="t" style="left:492.25px;top:11.5px;width:16px;text-align:center;font-size:6.7px;color:#2a2a2a">14</div>
<div style="left:508px;top:10px;width:16px;height:10px;background:#ebebeb;border-left:1px solid #f6f6f6"></div>
<div class="t" style="left:508.25px;top:11.5px;width:16px;text-align:center;font-size:6.7px;color:#2a2a2a">15</div>
<div style="left:524px;top:10px;width:16px;height:10px;background:#ebebeb;border-left:1px solid #f6f6f6"></div>
<div class="t" style="left:524.25px;top:11.5px;width:16px;text-align:center;font-size:6.7px;color:#2a2a2a">16</div>
<div style="left:540px;top:10px;width:16px;height:10px;background:#ebebeb;border-left:1px solid #f6f6f6"></div>
<div class="t" style="left:540.25px;top:11.5px;width:16px;text-align:center;font-size:6.7px;color:#2a2a2a">17</div>
<div style="left:556px;top:10px;width:16px;height:10px;background:#ebebeb;border-left:1px solid #f6f6f6"></div>
<div class="t" style="left:556.25px;top:11.5px;width:16px;text-align:center;font-size:6.7px;color:#2a2a2a">18</div>
<div style="left:572px;top:10px;width:16px;height:10px;background:#dadada;border-left:1px solid #ebebeb"></div>
<div class="t" style="left:572.25px;top:11.5px;width:16px;text-align:center;font-size:6.7px;color:#2a2a2a">19</div>
<div style="left:588px;top:10px;width:16px;height:10px;background:#dadada;border-left:1px solid #ebebeb"></div>
<div class="t" style="left:588.25px;top:11.5px;width:16px;text-align:center;font-size:6.7px;color:#2a2a2a">20</div>
<div class="t" style="left:43.50px;top:1.8px;width:112px;text-align:right;font-size:6.7px;color:#2a2a2a">SEM 34, 17 de agosto</div>
<div class="t" style="left:156.25px;top:1.8px;width:112px;text-align:center;font-size:6.7px;color:#2a2a2a">SEM 35, 24 de agosto</div>
<div class="t" style="left:268.25px;top:1.8px;width:112px;text-align:center;font-size:6.7px;color:#2a2a2a">SEM 36, 31 de agosto</div>
<div style="left:268px;top:0;width:1px;height:20px;background:#b4b4b4"></div>
<div class="t" style="left:380.25px;top:1.8px;width:112px;text-align:center;font-size:6.7px;color:#2a2a2a">SEM 37, 7 de septiembre</div>
<div style="left:380px;top:0;width:1px;height:20px;background:#b4b4b4"></div>
<div class="t" style="left:492.25px;top:1.8px;width:112px;text-align:center;font-size:6.7px;color:#2a2a2a">SEM 38, 14 de septiembre</div>
<div style="left:492px;top:0;width:1px;height:20px;background:#b4b4b4"></div>
<div style="left:152.00px;top:19.6px;width:444.00px;height:0.6px;background:#c4c4c4"></div>
<div style="left:0;top:20px;width:596px;height:1px;background:#94bcef"></div>
<div style="left:0;top:33px;width:596px;height:1px;background:#66a0e9"></div>
<div style="left:0;top:0;width:152.00px;height:416.70px;overflow:hidden">
<div style="left:0;top:20.00px;width:152px;height:13.75px;background:#dde9f8"></div>
<div class="t b" style="left:0;top:22.80px;width:17.4px;text-align:right">0</div>
<svg style="left:21.2px;top:23.50px" width="6" height="6" viewBox="0 0 6 6"><circle cx="3" cy="3" r="2.6" fill="#6cbb45"/></svg>
<svg style="left:47.10px;top:24.40px" width="5.2" height="4" viewBox="0 0 5.2 4"><path d="M0.1 0.2 L5.1 0.2 L2.6 3.9 Z" fill="#111"/></svg>
<div class="t b" style="left:55.50px;top:22.80px">Web-cliente</div>
<div style="left:0;top:33.75px;width:152px;height:13.15px;background:#f0f0f0"></div>
<div class="t b" style="left:0;top:36.70px;width:17.4px;text-align:right">1</div>
<svg style="left:21.2px;top:37.40px" width="6.4" height="5.2" viewBox="0 0 6.4 5.2"><path d="M3.2 0.1 L6.3 5.1 L0.1 5.1 Z" fill="#f59a2e"/></svg>
<svg style="left:53.75px;top:38.30px" width="5.2" height="4" viewBox="0 0 5.2 4"><path d="M0.1 0.2 L5.1 0.2 L2.6 3.9 Z" fill="#111"/></svg>
<div class="t b" style="left:62.30px;top:36.70px">Preproducción</div>
<div style="left:0;top:46.90px;width:152px;height:20.60px;background:#fcfcfc"></div>
<div class="t" style="left:0;top:50.05px;width:17.4px;text-align:right">2</div>
<svg style="left:21.6px;top:51.15px" width="5" height="5" viewBox="0 0 10 10"><path d="M1 5 L3.7 8.2 L8.8 1.2" fill="none" stroke="#111" stroke-width="2.3"/></svg>
<svg style="left:60.20px;top:51.05px" width="5" height="5.6" viewBox="0 0 5 5.6"><path d="M0.55 0.5 L4.5 2.8 L0.55 5.1 Z" fill="none" stroke="#2a2a2a" stroke-width="0.75" stroke-linejoin="round"/></svg>
<div class="t" style="left:69.00px;top:50.05px">Comenzar la web del</div>
<div class="t" style="left:69.00px;top:58.25px">cliente</div>
<div style="left:0;top:67.50px;width:152px;height:20.25px;background:#f0f0f0"></div>
<div class="t" style="left:0;top:70.30px;width:17.4px;text-align:right">3</div>
<svg style="left:21.6px;top:71.40px" width="5" height="5" viewBox="0 0 10 10"><path d="M1 5 L3.7 8.2 L8.8 1.2" fill="none" stroke="#111" stroke-width="2.3"/></svg>
<svg style="left:60.20px;top:71.30px" width="5" height="5.6" viewBox="0 0 5 5.6"><path d="M0.55 0.5 L4.5 2.8 L0.55 5.1 Z" fill="none" stroke="#2a2a2a" stroke-width="0.75" stroke-linejoin="round"/></svg>
<div class="t" style="left:69.00px;top:70.30px">Cuestionario para el cliente</div>
<div class="t" style="left:69.00px;top:78.50px">y objetivos</div>
<div style="left:0;top:87.75px;width:152px;height:12.00px;background:#fcfcfc"></div>
<div class="t" style="left:0;top:90.30px;width:17.4px;text-align:right">4</div>
<svg style="left:21.6px;top:91.40px" width="5" height="5" viewBox="0 0 10 10"><path d="M1 5 L3.7 8.2 L8.8 1.2" fill="none" stroke="#111" stroke-width="2.3"/></svg>
<svg style="left:60.20px;top:91.30px" width="5" height="5.6" viewBox="0 0 5 5.6"><path d="M0.55 0.5 L4.5 2.8 L0.55 5.1 Z" fill="none" stroke="#2a2a2a" stroke-width="0.75" stroke-linejoin="round"/></svg>
<div class="t" style="left:69.00px;top:90.30px">Escenarios de uso</div>
<div style="left:0;top:99.75px;width:152px;height:11.75px;background:#f0f0f0"></div>
<div class="t" style="left:0;top:102.30px;width:17.4px;text-align:right">5</div>
<svg style="left:21.6px;top:103.40px" width="5" height="5" viewBox="0 0 10 10"><path d="M1 5 L3.7 8.2 L8.8 1.2" fill="none" stroke="#111" stroke-width="2.3"/></svg>
<svg style="left:60.20px;top:103.30px" width="5" height="5.6" viewBox="0 0 5 5.6"><path d="M0.55 0.5 L4.5 2.8 L0.55 5.1 Z" fill="none" stroke="#2a2a2a" stroke-width="0.75" stroke-linejoin="round"/></svg>
<div class="t" style="left:69.00px;top:102.30px">Análisis comparativo</div>
<div style="left:0;top:111.50px;width:152px;height:12.25px;background:#fcfcfc"></div>
<div class="t" style="left:0;top:114.40px;width:17.4px;text-align:right">6</div>
<svg style="left:21.6px;top:115.50px" width="5" height="5" viewBox="0 0 10 10"><path d="M1 5 L3.7 8.2 L8.8 1.2" fill="none" stroke="#111" stroke-width="2.3"/></svg>
<svg style="left:60.20px;top:115.40px" width="5" height="5.6" viewBox="0 0 5 5.6"><path d="M0.55 0.5 L4.5 2.8 L0.55 5.1 Z" fill="none" stroke="#2a2a2a" stroke-width="0.75" stroke-linejoin="round"/></svg>
<div class="t" style="left:69.00px;top:114.40px">Especificaciones técnicas</div>
<div style="left:0;top:123.75px;width:152px;height:20.25px;background:#f0f0f0"></div>
<div class="t" style="left:0;top:126.90px;width:17.4px;text-align:right">7</div>
<svg style="left:21.6px;top:128.00px" width="5" height="5" viewBox="0 0 10 10"><path d="M1 5 L3.7 8.2 L8.8 1.2" fill="none" stroke="#111" stroke-width="2.3"/></svg>
<svg style="left:60.20px;top:127.90px" width="5" height="5.6" viewBox="0 0 5 5.6"><path d="M0.55 0.5 L4.5 2.8 L0.55 5.1 Z" fill="none" stroke="#2a2a2a" stroke-width="0.75" stroke-linejoin="round"/></svg>
<div class="t" style="left:69.00px;top:126.90px">Crear Propuesta de</div>
<div class="t" style="left:69.00px;top:135.10px">proyecto</div>
<div style="left:0;top:144.00px;width:152px;height:12.25px;background:#fcfcfc"></div>
<div class="t" style="left:0;top:146.90px;width:17.4px;text-align:right">8</div>
<svg style="left:21.6px;top:148.00px" width="5" height="5" viewBox="0 0 10 10"><path d="M1 5 L3.7 8.2 L8.8 1.2" fill="none" stroke="#111" stroke-width="2.3"/></svg>
<svg style="left:60.20px;top:147.90px" width="5" height="5.6" viewBox="0 0 5 5.6"><path d="M0.55 0.5 L4.5 2.8 L0.55 5.1 Z" fill="none" stroke="#2a2a2a" stroke-width="0.75" stroke-linejoin="round"/></svg>
<div class="t" style="left:69.00px;top:146.90px">Crear Cronograma</div>
<div style="left:0;top:156.25px;width:152px;height:12.25px;background:#f0f0f0"></div>
<div class="t" style="left:0;top:159.05px;width:17.4px;text-align:right">9</div>
<svg style="left:21.6px;top:160.15px" width="5" height="5" viewBox="0 0 10 10"><path d="M1 5 L3.7 8.2 L8.8 1.2" fill="none" stroke="#111" stroke-width="2.3"/></svg>
<svg style="left:60.20px;top:160.05px" width="5" height="5.6" viewBox="0 0 5 5.6"><path d="M0.55 0.5 L4.5 2.8 L0.55 5.1 Z" fill="none" stroke="#2a2a2a" stroke-width="0.75" stroke-linejoin="round"/></svg>
<div class="t" style="left:69.00px;top:159.05px">Crear Lista de tareas</div>
<div style="left:0;top:168.50px;width:152px;height:12.10px;background:#fcfcfc"></div>
<div class="t" style="left:0;top:171.05px;width:17.4px;text-align:right">10</div>
<svg style="left:21px;top:171.65px" width="6" height="6" viewBox="0 0 6 6"><rect x="0.75" y="0.7" width="4.5" height="4.6" fill="#e5251f"/></svg>
<svg style="left:60.20px;top:172.05px" width="5" height="5.6" viewBox="0 0 5 5.6"><path d="M0.55 0.5 L4.5 2.8 L0.55 5.1 Z" fill="none" stroke="#2a2a2a" stroke-width="0.75" stroke-linejoin="round"/></svg>
<div class="t" style="left:69.00px;top:171.05px">Crear Tabla de contenido</div>
<div style="left:0;top:180.60px;width:152px;height:12.15px;background:#f0f0f0"></div>
<div class="t" style="left:0;top:183.20px;width:17.4px;text-align:right">11</div>
<svg style="left:21.2px;top:183.90px" width="6" height="6" viewBox="0 0 6 6"><circle cx="3" cy="3" r="2.6" fill="#6cbb45"/></svg>
<svg style="left:60.20px;top:184.20px" width="5" height="5.6" viewBox="0 0 5 5.6"><path d="M0.55 0.5 L4.5 2.8 L0.55 5.1 Z" fill="none" stroke="#2a2a2a" stroke-width="0.75" stroke-linejoin="round"/></svg>
<div class="t" style="left:69.00px;top:183.20px">Definir Comunicaciones</div>
<div style="left:0;top:192.75px;width:152px;height:12.25px;background:#fcfcfc"></div>
<div class="t" style="left:0;top:195.30px;width:17.4px;text-align:right">12</div>
<svg style="left:21.2px;top:195.90px" width="6" height="6" viewBox="0 0 6 6"><circle cx="2.9" cy="2.9" r="1.75" fill="#fdfdfd" stroke="#a6a6a6" stroke-width="0.65"/></svg>
<svg style="left:60.20px;top:196.30px" width="5" height="5.6" viewBox="0 0 5 5.6"><path d="M0.55 0.5 L4.5 2.8 L0.55 5.1 Z" fill="none" stroke="#2a2a2a" stroke-width="0.75" stroke-linejoin="round"/></svg>
<div class="t" style="left:69.00px;top:195.30px">Crear Mapa del sitio</div>
<div style="left:0;top:205.00px;width:152px;height:12.25px;background:#f0f0f0"></div>
<div class="t" style="left:0;top:207.30px;width:17.4px;text-align:right">13</div>
<svg style="left:21.2px;top:207.90px" width="6" height="6" viewBox="0 0 6 6"><circle cx="2.9" cy="2.9" r="1.75" fill="#fdfdfd" stroke="#a6a6a6" stroke-width="0.65"/></svg>
<svg style="left:53.70px;top:208.30px" width="5" height="5.6" viewBox="0 0 5 5.6"><path d="M0.55 0.5 L4.5 2.8 L0.55 5.1 Z" fill="none" stroke="#2a2a2a" stroke-width="0.75" stroke-linejoin="round"/></svg>
<div class="t" style="left:62.10px;top:207.30px">Preproducción finalizada</div>
<div style="left:0;top:217.25px;width:152px;height:13.35px;background:#fcfcfc"></div>
<div class="t b" style="left:0;top:219.40px;width:17.4px;text-align:right">14</div>
<svg style="left:21.2px;top:220.10px" width="6" height="6" viewBox="0 0 6 6"><circle cx="3" cy="3" r="2.6" fill="#6cbb45"/></svg>
<svg style="left:53.75px;top:221.00px" width="5.2" height="4" viewBox="0 0 5.2 4"><path d="M0.1 0.2 L5.1 0.2 L2.6 3.9 Z" fill="#111"/></svg>
<div class="t b" style="left:62.30px;top:219.40px">Producción</div>
<div style="left:0;top:230.60px;width:152px;height:12.15px;background:#f0f0f0"></div>
<div class="t" style="left:0;top:233.20px;width:17.4px;text-align:right">15</div>
<svg style="left:21.2px;top:233.90px" width="6" height="6" viewBox="0 0 6 6"><circle cx="3" cy="3" r="2.6" fill="#6cbb45"/></svg>
<svg style="left:60.20px;top:234.20px" width="5" height="5.6" viewBox="0 0 5 5.6"><path d="M0.55 0.5 L4.5 2.8 L0.55 5.1 Z" fill="none" stroke="#2a2a2a" stroke-width="0.75" stroke-linejoin="round"/></svg>
<div class="t" style="left:69.00px;top:233.20px">Diseños de ejemplo</div>
<div style="left:0;top:242.75px;width:152px;height:20.15px;background:#fcfcfc"></div>
<div class="t" style="left:0;top:245.30px;width:17.4px;text-align:right">16</div>
<svg style="left:21.2px;top:245.90px" width="6" height="6" viewBox="0 0 6 6"><circle cx="2.9" cy="2.9" r="1.75" fill="#fdfdfd" stroke="#a6a6a6" stroke-width="0.65"/></svg>
<svg style="left:60.20px;top:246.30px" width="5" height="5.6" viewBox="0 0 5 5.6"><path d="M0.55 0.5 L4.5 2.8 L0.55 5.1 Z" fill="none" stroke="#2a2a2a" stroke-width="0.75" stroke-linejoin="round"/></svg>
<div class="t" style="left:69.00px;top:245.30px">Revisión por el cliente y</div>
<div class="t" style="left:69.00px;top:253.50px">selección del diseño</div>
<div style="left:0;top:262.90px;width:152px;height:14.00px;background:#f0f0f0"></div>
<div class="t" style="left:0;top:265.70px;width:17.4px;text-align:right">17</div>
<svg style="left:21.2px;top:266.30px" width="6" height="6" viewBox="0 0 6 6"><circle cx="2.9" cy="2.9" r="1.75" fill="#fdfdfd" stroke="#a6a6a6" stroke-width="0.65"/></svg>
<svg style="left:60.20px;top:266.70px" width="5" height="5.6" viewBox="0 0 5 5.6"><path d="M0.55 0.5 L4.5 2.8 L0.55 5.1 Z" fill="none" stroke="#2a2a2a" stroke-width="0.75" stroke-linejoin="round"/></svg>
<div class="t" style="left:69.00px;top:265.70px">Creación de las páginas</div>
<div style="left:0;top:276.90px;width:152px;height:11.85px;background:#fcfcfc"></div>
<div class="t" style="left:0;top:279.40px;width:17.4px;text-align:right">18</div>
<svg style="left:21.2px;top:280.00px" width="6" height="6" viewBox="0 0 6 6"><circle cx="2.9" cy="2.9" r="1.75" fill="#fdfdfd" stroke="#a6a6a6" stroke-width="0.65"/></svg>
<svg style="left:60.20px;top:280.40px" width="5" height="5.6" viewBox="0 0 5 5.6"><path d="M0.55 0.5 L4.5 2.8 L0.55 5.1 Z" fill="none" stroke="#2a2a2a" stroke-width="0.75" stroke-linejoin="round"/></svg>
<div class="t" style="left:69.00px;top:279.40px">Revisión por el cliente</div>
<div style="left:0;top:288.75px;width:152px;height:11.85px;background:#f0f0f0"></div>
<div class="t" style="left:0;top:291.30px;width:17.4px;text-align:right">19</div>
<svg style="left:21.2px;top:291.90px" width="6" height="6" viewBox="0 0 6 6"><circle cx="2.9" cy="2.9" r="1.75" fill="#fdfdfd" stroke="#a6a6a6" stroke-width="0.65"/></svg>
<svg style="left:60.20px;top:292.30px" width="5" height="5.6" viewBox="0 0 5 5.6"><path d="M0.55 0.5 L4.5 2.8 L0.55 5.1 Z" fill="none" stroke="#2a2a2a" stroke-width="0.75" stroke-linejoin="round"/></svg>
<div class="t" style="left:69.00px;top:291.30px">Producción final del sitio</div>
<div style="left:0;top:300.60px;width:152px;height:12.15px;background:#fcfcfc"></div>
<div class="t" style="left:0;top:303.55px;width:17.4px;text-align:right">20</div>
<svg style="left:21.2px;top:304.15px" width="6" height="6" viewBox="0 0 6 6"><circle cx="2.9" cy="2.9" r="1.75" fill="#fdfdfd" stroke="#a6a6a6" stroke-width="0.65"/></svg>
<svg style="left:60.20px;top:304.55px" width="5" height="5.6" viewBox="0 0 5 5.6"><path d="M0.55 0.5 L4.5 2.8 L0.55 5.1 Z" fill="none" stroke="#2a2a2a" stroke-width="0.75" stroke-linejoin="round"/></svg>
<div class="t" style="left:69.00px;top:303.55px">Pruebas beta</div>
<div style="left:0;top:312.75px;width:152px;height:12.00px;background:#f0f0f0"></div>
<div class="t" style="left:0;top:315.70px;width:17.4px;text-align:right">21</div>
<svg style="left:21.2px;top:316.30px" width="6" height="6" viewBox="0 0 6 6"><circle cx="2.9" cy="2.9" r="1.75" fill="#fdfdfd" stroke="#a6a6a6" stroke-width="0.65"/></svg>
<svg style="left:60.20px;top:316.70px" width="5" height="5.6" viewBox="0 0 5 5.6"><path d="M0.55 0.5 L4.5 2.8 L0.55 5.1 Z" fill="none" stroke="#2a2a2a" stroke-width="0.75" stroke-linejoin="round"/></svg>
<div class="t" style="left:69.00px;top:315.70px">Pruebas de usabilidad</div>
<div style="left:0;top:324.75px;width:152px;height:12.15px;background:#fcfcfc"></div>
<div class="t" style="left:0;top:327.80px;width:17.4px;text-align:right">22</div>
<svg style="left:21.2px;top:328.40px" width="6" height="6" viewBox="0 0 6 6"><circle cx="2.9" cy="2.9" r="1.75" fill="#fdfdfd" stroke="#a6a6a6" stroke-width="0.65"/></svg>
<svg style="left:60.20px;top:328.80px" width="5" height="5.6" viewBox="0 0 5 5.6"><path d="M0.55 0.5 L4.5 2.8 L0.55 5.1 Z" fill="none" stroke="#2a2a2a" stroke-width="0.75" stroke-linejoin="round"/></svg>
<div class="t" style="left:69.00px;top:327.80px">Crear guía de estilo</div>
<div style="left:0;top:336.90px;width:152px;height:12.10px;background:#f0f0f0"></div>
<div class="t" style="left:0;top:339.80px;width:17.4px;text-align:right">23</div>
<svg style="left:21.2px;top:340.40px" width="6" height="6" viewBox="0 0 6 6"><circle cx="2.9" cy="2.9" r="1.75" fill="#fdfdfd" stroke="#a6a6a6" stroke-width="0.65"/></svg>
<svg style="left:60.20px;top:340.80px" width="5" height="5.6" viewBox="0 0 5 5.6"><path d="M0.55 0.5 L4.5 2.8 L0.55 5.1 Z" fill="none" stroke="#2a2a2a" stroke-width="0.75" stroke-linejoin="round"/></svg>
<div class="t" style="left:69.00px;top:339.80px">Pruebas de navegador</div>
<div style="left:0;top:349.00px;width:152px;height:12.40px;background:#fcfcfc"></div>
<div class="t" style="left:0;top:351.90px;width:17.4px;text-align:right">24</div>
<svg style="left:21.2px;top:352.50px" width="6" height="6" viewBox="0 0 6 6"><circle cx="2.9" cy="2.9" r="1.75" fill="#fdfdfd" stroke="#a6a6a6" stroke-width="0.65"/></svg>
<svg style="left:60.20px;top:352.90px" width="5" height="5.6" viewBox="0 0 5 5.6"><path d="M0.55 0.5 L4.5 2.8 L0.55 5.1 Z" fill="none" stroke="#2a2a2a" stroke-width="0.75" stroke-linejoin="round"/></svg>
<div class="t" style="left:69.00px;top:351.90px">Corregir fallos</div>
<div style="left:0;top:361.40px;width:152px;height:12.20px;background:#f0f0f0"></div>
<div class="t" style="left:0;top:364.10px;width:17.4px;text-align:right">25</div>
<svg style="left:21.2px;top:364.70px" width="6" height="6" viewBox="0 0 6 6"><circle cx="2.9" cy="2.9" r="1.75" fill="#fdfdfd" stroke="#a6a6a6" stroke-width="0.65"/></svg>
<svg style="left:53.70px;top:365.10px" width="5" height="5.6" viewBox="0 0 5 5.6"><path d="M0.55 0.5 L4.5 2.8 L0.55 5.1 Z" fill="none" stroke="#2a2a2a" stroke-width="0.75" stroke-linejoin="round"/></svg>
<div class="t" style="left:62.10px;top:364.10px">Producción finalizada</div>
<div style="left:0;top:373.60px;width:152px;height:12.30px;background:#fcfcfc"></div>
<div class="t b" style="left:0;top:376.30px;width:17.4px;text-align:right">26</div>
<svg style="left:21.2px;top:376.90px" width="6" height="6" viewBox="0 0 6 6"><circle cx="2.9" cy="2.9" r="1.75" fill="#fdfdfd" stroke="#a6a6a6" stroke-width="0.65"/></svg>
<svg style="left:53.75px;top:377.90px" width="5.2" height="4" viewBox="0 0 5.2 4"><path d="M0.1 0.2 L5.1 0.2 L2.6 3.9 Z" fill="#111"/></svg>
<div class="t b" style="left:62.30px;top:376.30px">Postproducción</div>
<div style="left:0;top:385.90px;width:152px;height:20.00px;background:#f0f0f0"></div>
<div class="t" style="left:0;top:388.60px;width:17.4px;text-align:right">27</div>
<svg style="left:21.2px;top:389.20px" width="6" height="6" viewBox="0 0 6 6"><circle cx="2.9" cy="2.9" r="1.75" fill="#fdfdfd" stroke="#a6a6a6" stroke-width="0.65"/></svg>
<svg style="left:60.20px;top:389.60px" width="5" height="5.6" viewBox="0 0 5 5.6"><path d="M0.55 0.5 L4.5 2.8 L0.55 5.1 Z" fill="none" stroke="#2a2a2a" stroke-width="0.75" stroke-linejoin="round"/></svg>
<div class="t" style="left:69.00px;top:388.60px">Definir calendario de</div>
<div class="t" style="left:69.00px;top:396.80px">mantenimiento</div>
<div style="left:0;top:405.90px;width:152px;height:10.80px;background:#fcfcfc"></div>
<div class="t" style="left:0;top:408.70px;width:17.4px;text-align:right">28</div>
<svg style="left:21.2px;top:409.30px" width="6" height="6" viewBox="0 0 6 6"><circle cx="2.9" cy="2.9" r="1.75" fill="#fdfdfd" stroke="#a6a6a6" stroke-width="0.65"/></svg>
<svg style="left:60.20px;top:409.70px" width="5" height="5.6" viewBox="0 0 5 5.6"><path d="M0.55 0.5 L4.5 2.8 L0.55 5.1 Z" fill="none" stroke="#2a2a2a" stroke-width="0.75" stroke-linejoin="round"/></svg>
<div class="t" style="left:69.00px;top:408.70px">Retrospectiva del proyecto</div>
<div style="left:0;top:33px;width:152px;height:1px;background:#66a0e9"></div>
<div style="left:0;top:0;width:152px;height:20px;background:#ececec"></div>
<div style="left:0;top:20px;width:152px;height:1px;background:#94bcef"></div>
<div style="left:18.9px;top:0;width:0.6px;height:20px;background:#cfcfcf"></div>
<div style="left:44.6px;top:0;width:0.6px;height:20px;background:#cfcfcf"></div>
<div class="t" style="left:3px;top:1.8px;font-size:6.6px">Nº</div>
<div class="t" style="left:21px;top:1.8px;font-size:6.6px">Estado</div>
<div class="t" style="left:46.5px;top:1.8px;font-size:6.6px">Título</div>
<svg style="left:12.2px;top:8.6px" width="5" height="4.4" viewBox="0 0 10 8.8"><path d="M5 0.4 L9.8 8.4 L0.2 8.4 Z" fill="#111"/></svg>
</div>
<div style="left:151.90px;top:0;width:5px;height:416.70px;border-left:0.75px solid #b2b2b2;border-right:0.75px solid #b2b2b2"></div>
</div>
<div class="rp" style="left:656px;top:33px;font-size:6.4px;color:#9d9597">Actividad: <span style="position:static;color:#f1edee;font-weight:bold">Plan</span></div>
<div style="left:608.3px;top:45.2px;width:153.2px;height:18.6px;background:#625a5d;border-radius:2.2px;overflow:hidden"><div style="left:0;top:0;width:25.5px;height:18.6px;background:#1f62d8"></div></div>
<svg style="left:608px;top:45px" width="154" height="19" viewBox="608 45 154 19" fill="none" stroke-linecap="round" stroke-linejoin="round">
<path d="M616.6 51.2 H625.1 V59.7 H616.6 Z" fill="#f6f3f4"/>
<path d="M618.6 51.4 V50.4 H619.8 C619.9 48.9 621.8 48.9 621.9 50.4 H623.1 V51.4 Z" fill="#f6f3f4"/>
<path d="M618.5 55.6 L620.2 57.4 L623.4 53.6" stroke="#2262d9" stroke-width="1.1"/>
<path d="M617.6 52.4 H624.1 V58.7 H617.6 Z" stroke="#8fb0ea" stroke-width="0.35"/>
<g transform="translate(647.1 55) rotate(-42)" stroke="#f6f3f4" stroke-width="1.05"><rect x="-5.9" y="-2" width="6.8" height="4" rx="2"/><rect x="-0.9" y="-2" width="6.8" height="4" rx="2"/></g>
<path d="M669 50.2 H675.4 M669.6 52.2 H674.8 M670.2 54.1 H674.2 M669.4 56.1 H672.2 M668.6 58 H672 M668.2 59.8 H673" stroke="#f6f3f4" stroke-width="0.95" stroke-linecap="butt"/>
<circle cx="675.2" cy="57.1" r="2.75" fill="#f6f3f4"/>
<path d="M675.2 55.4 V58.8" stroke="#645c5f" stroke-width="0.8"/>
<path d="M696.2 51.4 A4.5 4.5 0 1 0 699.4 50.2" stroke="#f6f3f4" stroke-width="0.95"/>
<path d="M700.3 49 L699 50.2 L700.3 51.4" stroke="#f6f3f4" stroke-width="0.85"/>
<text x="699.25" y="56.6" font-family="Liberation Sans, sans-serif" font-size="5" font-weight="bold" text-anchor="middle" fill="#f6f3f4" stroke="none">%</text>
<path d="M719.7 50.90 H726.2" stroke="#f6f3f4" stroke-width="1.9" stroke-linecap="butt"/>
<rect x="727.2" y="49.95" width="1.9" height="1.9" fill="#f6f3f4"/>
<path d="M719.7 54.70 H726.2" stroke="#f6f3f4" stroke-width="1.9" stroke-linecap="butt"/>
<rect x="727.2" y="53.75" width="1.9" height="1.9" fill="#f6f3f4"/>
<path d="M719.7 58.60 H726.2" stroke="#f6f3f4" stroke-width="1.9" stroke-linecap="butt"/>
<rect x="727.2" y="57.65" width="1.9" height="1.9" fill="#f6f3f4"/>
<rect x="745.7" y="49.9" width="9.9" height="9.8" fill="#f6f3f4"/>
<path d="M747.6 58 L748.2 56 L753 51.2 L754.4 52.6 L749.6 57.4 Z" fill="#3a3336"/>
</svg>
<svg style="left:610.40px;top:72.70px" width="4.4" height="5" viewBox="0 0 4.4 5"><path d="M0.2 0.1 L4.2 2.5 L0.2 4.9 Z" fill="#f5f2f3"/></svg>
<div class="rp b" style="left:618.90px;top:71.50px;color:#e9e4e5;font-size:6.30px">Título</div>
<div style="left:652.7px;top:71.00px;width:108.8px;height:8.60px;background:#3a3134;border-radius:1.2px"></div>
<div class="rp" style="left:654.60px;top:71.70px;color:#e9e4e5;font-size:6.30px">Web-cliente</div>
<div style="left:607px;top:85px;width:155px;height:1px;background:linear-gradient(90deg,rgba(74,64,68,0),rgba(74,64,68,1) 12%,rgba(74,64,68,1) 90%,rgba(74,64,68,0.3))"></div>
<svg style="left:610.40px;top:92.90px" width="4.4" height="5" viewBox="0 0 4.4 5"><path d="M0.2 0.1 L4.2 2.5 L0.2 4.9 Z" fill="#f5f2f3"/></svg>
<div class="rp b" style="left:618.90px;top:91.70px;color:#e9e4e5;font-size:6.30px">Trabajo</div>
<div style="left:652.7px;top:91.00px;width:108.8px;height:8.70px;background:#3a3134;border-radius:1.2px"></div>
<div class="rp" style="left:618.90px;top:106.70px;color:#e9e4e5;font-size:6.30px">Duración</div>
<div style="left:652.7px;top:106.00px;width:108.8px;height:8.70px;background:#3a3134;border-radius:1.2px"></div>
<div class="rp" style="left:618.90px;top:121.10px;color:#e9e4e5;font-size:6.30px">Hito</div>
<div style="left:652.7px;top:121.6px;width:6px;height:6px;background:#4a4245;border-radius:1px"></div>
<div style="left:607px;top:135px;width:155px;height:1px;background:linear-gradient(90deg,rgba(74,64,68,0),rgba(74,64,68,1) 12%,rgba(74,64,68,1) 90%,rgba(74,64,68,0.3))"></div>
<div class="rp" style="left:618.90px;top:141.90px;color:#e9e4e5;font-size:6.30px">Inicio</div>
<div style="left:653px;top:140.20px;width:108.2px;height:8.40px;background:#625a5d;border-radius:2px"></div>
<div class="rp" style="left:656.60px;top:140.90px;color:#e9e4e5;font-size:6.30px">Temprano</div>
<svg style="left:753px;top:139.90px" width="9" height="9" viewBox="0 0 9 9"><rect x="1.1" y="1.1" width="6.7" height="6.8" rx="1.6" fill="#2f6fe0"/><path d="M3.1 3.9 L4.45 2.6 L5.8 3.9 M3.1 5.2 L4.45 6.5 L5.8 5.2" fill="none" stroke="#fff" stroke-width="0.75" stroke-linecap="round" stroke-linejoin="round"/></svg>
<div class="rp" style="left:618.90px;top:156.50px;color:#e9e4e5;font-size:6.30px">Temprano</div>
<div style="left:652.7px;top:156.20px;width:108.8px;height:8.40px;background:#3a3134;border-radius:1.2px"></div>
<div class="rp" style="left:654.70px;top:156.30px;color:#efebec;font-size:6.45px">24 de agosto de 2020, 0:00</div>
<svg style="left:753px;top:155.3px" width="9" height="9" viewBox="0 0 9 9"><rect x="1.1" y="1.4" width="6.7" height="6.2" rx="1.6" fill="#2f6fe0"/><path d="M2.9 3.8 L4.45 5.4 L6 3.8" fill="none" stroke="#fff" stroke-width="0.8" stroke-linecap="round" stroke-linejoin="round"/></svg>
<div class="rp" style="left:618.90px;top:171.80px;color:#e9e4e5;font-size:6.30px">Fin</div>
<div style="left:653px;top:170.40px;width:108.2px;height:8.40px;background:#625a5d;border-radius:2px"></div>
<div class="rp" style="left:656.60px;top:171.10px;color:#e9e4e5;font-size:6.30px">Sin restricción</div>
<svg style="left:753px;top:170.10px" width="9" height="9" viewBox="0 0 9 9"><rect x="1.1" y="1.1" width="6.7" height="6.8" rx="1.6" fill="#2f6fe0"/><path d="M3.1 3.9 L4.45 2.6 L5.8 3.9 M3.1 5.2 L4.45 6.5 L5.8 5.2" fill="none" stroke="#fff" stroke-width="0.75" stroke-linecap="round" stroke-linejoin="round"/></svg>
<div class="rp" style="left:618.90px;top:187.00px;color:#e9e4e5;font-size:6.30px">Alineación</div>
<div style="left:653px;top:185.40px;width:108.2px;height:8.10px;background:#625a5d;border-radius:2px"></div>
<div class="rp" style="left:656.60px;top:185.95px;color:#e9e4e5;font-size:6.30px">LAP</div>
<svg style="left:753px;top:184.95px" width="9" height="9" viewBox="0 0 9 9"><rect x="1.1" y="1.1" width="6.7" height="6.8" rx="1.6" fill="#2f6fe0"/><path d="M3.1 3.9 L4.45 2.6 L5.8 3.9 M3.1 5.2 L4.45 6.5 L5.8 5.2" fill="none" stroke="#fff" stroke-width="0.75" stroke-linecap="round" stroke-linejoin="round"/></svg>
<div style="left:607px;top:200px;width:155px;height:1px;background:linear-gradient(90deg,rgba(74,64,68,0),rgba(74,64,68,1) 12%,rgba(74,64,68,1) 90%,rgba(74,64,68,0.3))"></div>
<svg style="left:610.40px;top:208.30px" width="4.4" height="5" viewBox="0 0 4.4 5"><path d="M0.2 0.1 L4.2 2.5 L0.2 4.9 Z" fill="#f5f2f3"/></svg>
<div class="rp b" style="left:618.90px;top:206.70px;color:#e9e4e5;font-size:6.30px">Avanzado</div>
<div style="left:607px;top:221px;width:155px;height:1px;background:linear-gradient(90deg,rgba(74,64,68,0),rgba(74,64,68,1) 12%,rgba(74,64,68,1) 90%,rgba(74,64,68,0.3))"></div>
<svg style="left:610.20px;top:229.40px" width="5" height="4.4" viewBox="0 0 5 4.4"><path d="M0.1 0.2 L4.9 0.2 L2.5 4.2 Z" fill="#f5f2f3"/></svg>
<div class="rp b" style="left:618.70px;top:227.50px;color:#e9e4e5;font-size:6.30px">Esperado</div>
<div class="rp" style="left:618.70px;top:242.20px;color:#ddd8d9;font-size:6.20px">Estado</div>
<svg style="left:652px;top:243.70px" width="5" height="5" viewBox="0 0 5 5"><circle cx="2.5" cy="2.5" r="1.85" fill="#6cc043"/></svg>
<div class="rp" style="left:658.80px;top:242.20px;color:#efebec;font-size:6.20px">A tiempo</div>
<div class="rp" style="left:618.70px;top:256.90px;color:#ddd8d9;font-size:6.20px">Inicio</div>
<div class="rp" style="left:652.10px;top:256.90px;color:#efebec;font-size:6.20px">28 ago 2020 0:00</div>
<div class="rp" style="left:618.70px;top:271.90px;color:#ddd8d9;font-size:6.20px">Fin</div>
<div class="rp" style="left:652.10px;top:271.90px;color:#efebec;font-size:6.20px">13 oct 2020 15:00</div>
<div class="rp" style="left:618.70px;top:286.80px;color:#ddd8d9;font-size:6.20px">Trabajo</div>
<div class="rp" style="left:652.10px;top:286.80px;color:#efebec;font-size:6.20px">1,92 meses</div>
<div class="rp" style="left:618.70px;top:301.70px;color:#ddd8d9;font-size:6.20px">Duración</div>
<div class="rp" style="left:652.10px;top:301.70px;color:#efebec;font-size:6.20px">1,64 meses (1,55 mesest)</div>
<div class="rp" style="left:618.70px;top:316.70px;color:#ddd8d9;font-size:6.20px">Uso</div>
</div></body></html>
